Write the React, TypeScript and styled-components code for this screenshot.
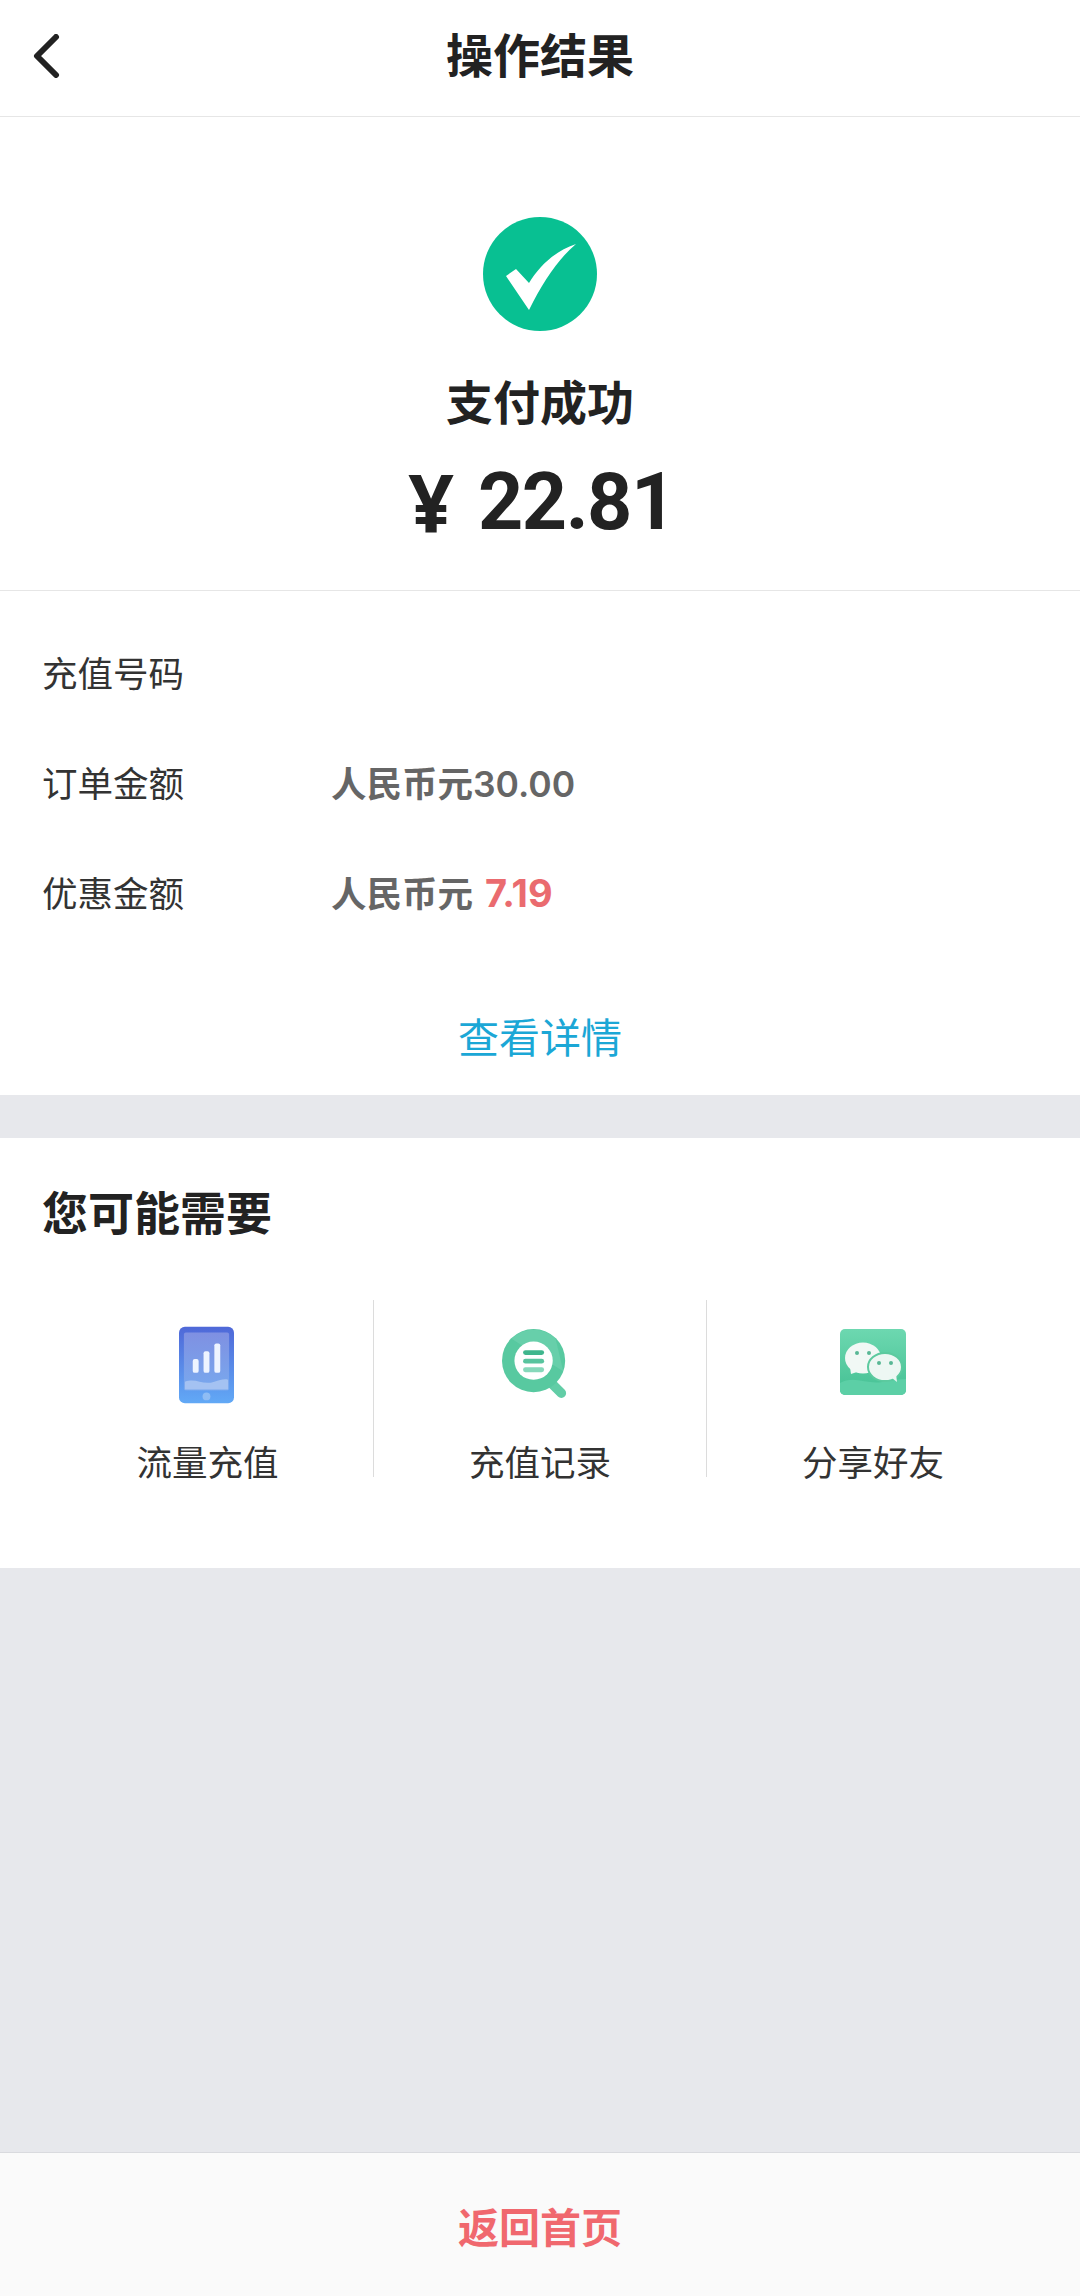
import React from "react";
import styled, { createGlobalStyle } from "styled-components";

const Global = createGlobalStyle`
  html, body { margin: 0; padding: 0; background: #e7e8ec; }
  * { box-sizing: border-box; }
  #root { width: 1080px; height: 2296px; }
`;

const Page = styled.div`
  width: 1080px;
  height: 2296px;
  display: flex;
  flex-direction: column;
  background: #e7e8ec;
  font-family: Roboto, "Noto Sans CJK SC", sans-serif;
  color: #222;
`;

const Header = styled.header`
  height: 117px;
  flex: none;
  display: grid;
  grid-template-columns: 120px 1fr 120px;
  align-items: center;
  background: #fff;
  border-bottom: 1px solid #e6e6e6;
`;

const BackButton = styled.div`
  padding-left: 32px;
  display: flex;
  padding-bottom: 4px;
`;

const Title = styled.h1`
  margin: 0;
  text-align: center;
  font-size: 47px;
  line-height: 60px;
  font-weight: 700;
  color: #222;
  padding-bottom: 3px;
`;

const Result = styled.section`
  height: 474px;
  flex: none;
  display: flex;
  flex-direction: column;
  align-items: center;
  padding-top: 100px;
  background: #fff;
  border-bottom: 1px solid #e6e6e6;
`;

const Status = styled.div`
  margin-top: 43px;
  font-size: 47px;
  line-height: 60px;
  font-weight: 700;
`;

const Amount = styled.div`
  margin-top: 23px;
  padding-left: 3px;
  display: flex;
  align-items: center;
  gap: 24px;
  height: 90px;
`;

const Currency = styled.span`
  font-family: "Noto Sans", sans-serif;
  font-size: 80px;
  line-height: 90px;
  font-weight: 700;
`;

const Figure = styled.span`
  font-size: 79px;
  line-height: 90px;
  font-weight: 700;
  letter-spacing: -1.5px;
`;

const Details = styled.section`
  height: 504px;
  flex: none;
  display: flex;
  flex-direction: column;
  padding: 25px 42px 0;
  background: #fff;
`;

const Row = styled.div`
  height: 110px;
  flex: none;
  display: flex;
  align-items: center;
`;

const RowLabel = styled.span`
  width: 289px;
  font-size: 35.5px;
  color: #333;
`;

const RowValue = styled.span`
  font-family: Inter, "Noto Sans CJK SC", sans-serif;
  font-size: 35.5px;
  font-weight: 600;
  color: #666;
  white-space: pre;
`;

const ValueFigure = styled.span<{ $accent?: boolean }>`
  font-size: ${(p) => (p.$accent ? "38px" : "35.5px")};
  font-weight: ${(p) => (p.$accent ? 700 : 600)};
  margin-left: ${(p) => (p.$accent ? "3px" : "0")};
  color: ${(p) => (p.$accent ? "#ea6b6f" : "inherit")};
`;

const DetailLink = styled.div`
  margin-top: 66px;
  text-align: center;
  font-size: 41px;
  line-height: 54px;
  color: #1ba7d6;
`;

const Suggest = styled.section`
  margin-top: 43px;
  height: 430px;
  flex: none;
  padding: 46px 0 0;
  background: #fff;
`;

const SuggestTitle = styled.h2`
  margin: 0;
  padding-left: 42px;
  font-size: 46px;
  line-height: 60px;
  font-weight: 700;
  color: #222;
`;

const Shortcuts = styled.div`
  margin-top: 56px;
  padding-left: 42px;
  display: grid;
  grid-template-columns: 332px 333px 332px;
`;

const Shortcut = styled.div<{ $divider?: boolean }>`
  height: 177px;
  display: flex;
  flex-direction: column;
  align-items: center;
  border-right: ${(p) => (p.$divider ? "1px solid #dcdcdc" : "none")};
`;

const IconSlot = styled.div<{ $top: number; $nudge?: number }>`
  margin-top: 23px;
  height: 81px;
  flex: none;
  display: flex;
  align-items: flex-start;
  justify-content: center;
  padding-top: ${(p) => p.$top}px;
  padding-right: ${(p) => p.$nudge ?? 0}px;
`;

const ShortcutLabel = styled.div`
  margin-top: 47px;
  flex: none;
  font-size: 35.5px;
  line-height: 26px;
  color: #333;
`;

const Spacer = styled.div`
  flex: 1;
`;

const Footer = styled.footer`
  height: 144px;
  flex: none;
  display: flex;
  align-items: center;
  justify-content: center;
  background: #fafafa;
  border-top: 1px solid #d9dade;
  font-size: 41px;
  font-weight: 700;
  color: #f0686e;
`;

const BackIcon = () => (
  <svg width="28" height="44" viewBox="0 0 28 44" fill="none">
    <path d="M24 3 L5 22 L24 41" stroke="#222" strokeWidth="6" strokeLinecap="round" strokeLinejoin="round" />
  </svg>
);

const SuccessIcon = () => (
  <svg width="114" height="114" viewBox="0 0 114 114">
    <circle cx="57" cy="57" r="57" fill="#08c092" />
    <path d="M23 59 L33 52 L46 66 C56 50 70 35 93 27 C75 42 60 65 46 93 Z" fill="#fff" />
  </svg>
);

const PhoneIcon = () => (
  <svg width="55" height="78" viewBox="0 0 56 78">
    <defs>
      <linearGradient id="phoneBody" x1="0" y1="0" x2="0" y2="1">
        <stop offset="0" stopColor="#4f68d8" />
        <stop offset="1" stopColor="#62a9f6" />
      </linearGradient>
      <linearGradient id="phoneScreen" x1="0" y1="0" x2="0" y2="1">
        <stop offset="0" stopColor="#7f90e2" />
        <stop offset="1" stopColor="#78a9ee" />
      </linearGradient>
    </defs>
    <rect width="56" height="78" rx="6" fill="url(#phoneBody)" />
    <rect x="5" y="6" width="46" height="59" rx="2" fill="url(#phoneScreen)" />
    <path d="M6 56 C18 52 24 60 36 56 C42 54 46 53 50 54 V64 H6 Z" fill="#a4c2f2" />
    <rect x="14" y="33" width="6" height="14" rx="2" fill="#eef4ff" />
    <rect x="25" y="25" width="6" height="22" rx="2" fill="#eef4ff" />
    <rect x="36" y="17" width="6" height="30" rx="2" fill="#eef4ff" />
    <circle cx="28" cy="71" r="4" fill="#8fbdf4" />
  </svg>
);

const RecordIcon = () => (
  <svg width="67" height="71" viewBox="0 0 70 74">
    <path d="M51 56 L62 67" stroke="#62cda6" strokeWidth="10" strokeLinecap="round" />
    <circle cx="33" cy="33" r="33" fill="#58c9a0" />
    <path d="M10 10 A33 33 0 0 1 56 10 L64 44 Z" fill="#72d3b0" opacity="0.6" />
    <circle cx="33" cy="33" r="20" fill="#fff" />
    <rect x="22" y="22" width="22" height="5" rx="2.5" fill="#3fb68d" />
    <rect x="22" y="31" width="22" height="5" rx="2.5" fill="#58c49e" />
    <rect x="22" y="40" width="22" height="5" rx="2.5" fill="#86d8ba" />
  </svg>
);

const WechatIcon = () => (
  <svg width="66" height="66" viewBox="0 0 66 66">
    <defs>
      <linearGradient id="wechatBg" x1="0" y1="0" x2="0" y2="1">
        <stop offset="0" stopColor="#6dd8b0" />
        <stop offset="1" stopColor="#44c093" />
      </linearGradient>
    </defs>
    <rect width="66" height="66" rx="5" fill="url(#wechatBg)" />
    <path d="M0 54 C14 46 28 56 42 53 C52 51 60 50 66 50 V61 A5 5 0 0 1 61 66 H5 A5 5 0 0 1 0 61 Z" fill="#5ccfa6" />
    <ellipse cx="23" cy="29" rx="18" ry="15.5" fill="#f1f8f5" />
    <path d="M10 38 L11 45 L20 42 Z" fill="#f1f8f5" />
    <ellipse cx="45" cy="38" rx="17" ry="14" stroke="#5cca9f" strokeWidth="2" fill="#edf7f3" />
    <path d="M52 49 L57 53 L56 45 Z" fill="#edf7f3" />
    <circle cx="17" cy="24" r="2" fill="#58b795" />
    <circle cx="29" cy="24" r="2" fill="#58b795" />
    <circle cx="39" cy="34" r="2" fill="#58b795" />
    <circle cx="51" cy="34" r="2" fill="#58b795" />
  </svg>
);

export default function App() {
  return (
    <Page>
      <Global />
      <Header>
        <BackButton>
          <BackIcon />
        </BackButton>
        <Title>操作结果</Title>
        <span />
      </Header>
      <Result>
        <SuccessIcon />
        <Status>支付成功</Status>
        <Amount>
          <Currency>¥</Currency>
          <Figure>22.81</Figure>
        </Amount>
      </Result>
      <Details>
        <Row>
          <RowLabel>充值号码</RowLabel>
        </Row>
        <Row>
          <RowLabel>订单金额</RowLabel>
          <RowValue>
            人民币元<ValueFigure>30.00</ValueFigure>
          </RowValue>
        </Row>
        <Row>
          <RowLabel>优惠金额</RowLabel>
          <RowValue>
            人民币元 <ValueFigure $accent>7.19</ValueFigure>
          </RowValue>
        </Row>
        <DetailLink>查看详情</DetailLink>
      </Details>
      <Suggest>
        <SuggestTitle>您可能需要</SuggestTitle>
        <Shortcuts>
          <Shortcut $divider>
            <IconSlot $top={3} $nudge={2}>
              <PhoneIcon />
            </IconSlot>
            <ShortcutLabel>流量充值</ShortcutLabel>
          </Shortcut>
          <Shortcut $divider>
            <IconSlot $top={6} $nudge={9}>
              <RecordIcon />
            </IconSlot>
            <ShortcutLabel>充值记录</ShortcutLabel>
          </Shortcut>
          <Shortcut>
            <IconSlot $top={6}>
              <WechatIcon />
            </IconSlot>
            <ShortcutLabel>分享好友</ShortcutLabel>
          </Shortcut>
        </Shortcuts>
      </Suggest>
      <Spacer />
      <Footer>返回首页</Footer>
    </Page>
  );
}
